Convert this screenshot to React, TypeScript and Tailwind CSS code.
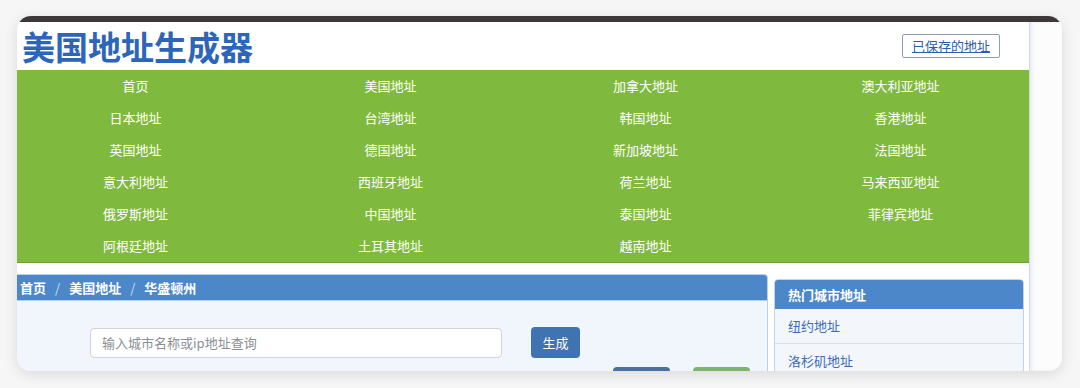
import React from "react";

const countries = [
  "首页", "美国地址", "加拿大地址", "澳大利亚地址",
  "日本地址", "台湾地址", "韩国地址", "香港地址",
  "英国地址", "德国地址", "新加坡地址", "法国地址",
  "意大利地址", "西班牙地址", "荷兰地址", "马来西亚地址",
  "俄罗斯地址", "中国地址", "泰国地址", "菲律宾地址",
  "阿根廷地址", "土耳其地址", "越南地址",
];

const hotCities = ["纽约地址", "洛杉矶地址"];

export default function App() {
  return (
    <div className="min-h-screen bg-[#f6f6f6] pt-[16px] pl-[17px] font-['Noto_Sans_CJK_SC','Liberation_Sans',sans-serif]">
      <div className="w-[1045px] h-[355px] rounded-[14px] overflow-hidden bg-white shadow-[0_3px_14px_rgba(0,0,0,0.12)] flex flex-col">
        <div className="h-[6px] bg-[#3e373a]" />
        <div className="flex flex-1 min-h-0">
          <div className="w-[1012px] overflow-hidden">
            {/* header */}
            <div className="h-[48px] flex items-center justify-between pl-[5px] pr-[29px]">
              <h1 className="text-[33px] leading-none font-bold text-[#2d66b8]">美国地址生成器</h1>
              <a className="h-[24px] px-[9px] flex items-center border border-[#8d9db6] rounded-[2px] text-[13px] text-[#2b5bb3] underline">
                已保存的地址
              </a>
            </div>

            {/* country nav */}
            <nav className="bg-[#7fba3f] border-b border-[#6e9f35]">
              <div className="-ml-[9px] grid grid-cols-[repeat(4,255px)]">
                {countries.map((c) => (
                  <div key={c} className="h-[32px] flex items-center justify-center text-[13px] text-white">
                    {c}
                  </div>
                ))}
              </div>
            </nav>

            {/* panels */}
            <div className="mt-[11px] flex gap-[6px] items-start">
              <div className="w-[751px] h-[120px] border-t border-r border-[#b9d0ea] rounded-tr-[4px] overflow-hidden bg-[#f1f6fd]">
                <div className="h-[26px] bg-[#4b87c9] border-b border-[#b3cfee] flex items-center pl-[3px] text-[13px] text-white font-bold">
                  <span>首页</span>
                  <span className="mx-[9px] font-normal text-[#cfdff3]">/</span>
                  <span>美国地址</span>
                  <span className="mx-[9px] font-normal text-[#cfdff3]">/</span>
                  <span>华盛顿州</span>
                </div>
                <div className="mt-[26px] ml-[73px] flex items-center">
                  <input
                    placeholder="输入城市名称或ip地址查询"
                    className="w-[412px] h-[30px] bg-white border border-[#cfd4da] rounded-[4px] px-[11px] text-[13px] text-[#555] placeholder:text-[#8a8f96] outline-none"
                  />
                  <button className="ml-[29px] w-[49px] h-[31px] rounded-[4px] bg-[#3f73b2] text-white text-[13px]">
                    生成
                  </button>
                </div>
                <div className="mt-[9px] ml-[596px] flex gap-[23px]">
                  <button className="w-[57px] h-[30px] rounded-[4px] bg-[#4a70a2]" />
                  <button className="w-[57px] h-[30px] rounded-[4px] bg-[#7db46b]" />
                </div>
              </div>

              <div className="mt-[5px] w-[250px] h-[120px] border border-[#c3d3e6] rounded-t-[4px] overflow-hidden bg-[#f3f7fc]">
                <div className="h-[29px] bg-[#4b87c9] flex items-center px-[13px] text-[13px] font-bold text-white">
                  热门城市地址
                </div>
                {hotCities.map((c) => (
                  <div key={c} className="h-[35px] flex items-center px-[13px] border-b border-[#d6dee8] text-[13px] text-[#3c6db4]">
                    {c}
                  </div>
                ))}
              </div>
            </div>
          </div>
          <div className="flex-1 bg-[#fcfcfd] border-l border-[#d2d9e1] shadow-[inset_2px_0_3px_rgba(120,140,170,0.15)]" />
        </div>
      </div>
    </div>
  );
}
